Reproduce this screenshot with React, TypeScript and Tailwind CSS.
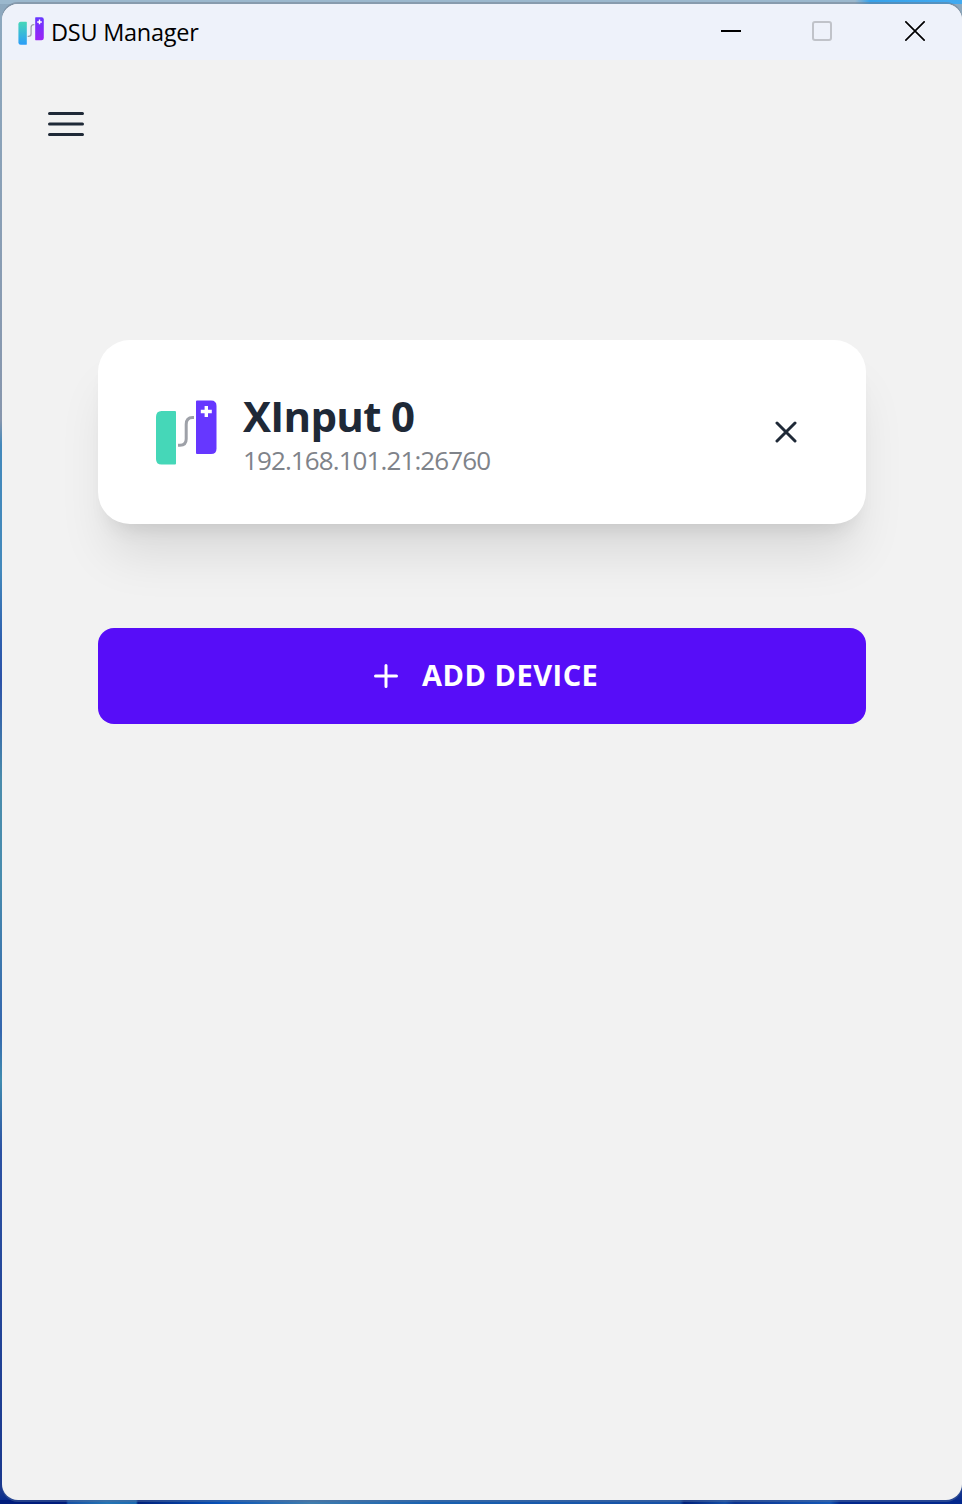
import React from "react";

function Logo({ id, className, gradient = false }: { id: string; className: string; gradient?: boolean }) {
  const left = gradient ? `url(#${id}-left)` : "#45d7b8";
  const right = gradient ? `url(#${id}-right)` : "#6637ff";
  return (
    <svg className={className} viewBox="0 0 62 65" preserveAspectRatio="none" aria-hidden="true">
      <defs>
        <linearGradient id={`${id}-left`} x1="0" y1="0" x2="0" y2="1">
          <stop offset="0" stopColor="#45d7b8" />
          <stop offset="1" stopColor="#2b9df8" />
        </linearGradient>
        <linearGradient id={`${id}-right`} x1="0" y1="0" x2="0" y2="1">
          <stop offset="0" stopColor="#6637ff" />
          <stop offset="1" stopColor="#9c24f5" />
        </linearGradient>
      </defs>
      <path d="M6.500 11H20Q21 11 21 12V63.500Q21 64.500 20 64.500H6.500Q1 64.500 1 59V17Q1 11 6.500 11Z" fill={left} />
      <path d="M42 .5H56Q61.500 .5 61.500 6V48.500Q61.500 54 56 54H42Q41 54 41 53V1.500Q41 .5 42 .5Z" fill={right} />
      <path d="M23 45.200H25Q31.200 45.200 31.200 39V24.500Q31.200 17.500 37.500 17.500H39" fill="none" stroke="#9ea1a8" strokeWidth="3" />
      <path d="M51.300 6V17M45.800 11.500H56.800" stroke="#fff" strokeWidth="3.400" />
    </svg>
  );
}

function TitleBar() {
  return (
    <header className="flex h-14 shrink-0 items-start bg-[#eef2fa] pr-px pl-4">
      <Logo id="app" gradient className="mt-[13px] h-7 w-[26px]" />
      <h1 className="ml-[7px] mt-3 text-[23.5px] leading-8 tracking-[-0.25px] text-black">DSU Manager</h1>
      <div className="ml-auto flex">
        <button className="flex h-[54px] w-[92px] items-center justify-center" aria-label="Minimize">
          <span className="h-0.5 w-5 bg-black" />
        </button>
        <button className="flex h-[54px] w-[92px] items-center justify-center" aria-label="Maximize">
          <span className="mr-0.5 size-5 rounded-[3px] border-2 border-[#c0c3c9]" />
        </button>
        <button className="flex h-[54px] w-[92px] items-center justify-center" aria-label="Close">
          <svg className="size-5" viewBox="0 0 20 20" fill="none" stroke="#000" strokeWidth="1.700">
            <path d="M.3 .3 19.700 19.700M19.700 .3 .3 19.700" />
          </svg>
        </button>
      </div>
    </header>
  );
}

function DeviceCard() {
  return (
    <section className="flex h-[184px] items-center rounded-[32px] bg-white pl-[57px] pr-[69px] shadow-[0_40px_50px_-10px_rgb(0_0_0/0.1),0_16px_20px_-12px_rgb(0_0_0/0.1)]">
      <Logo id="device" className="h-[65px] w-[62px]" />
      <div className="ml-[26px] pb-px">
        <h2 className="text-[42px] leading-[56px] font-bold tracking-[-0.7px] text-[#1f2937]">XInput 0</h2>
        <p className="text-[26px] leading-8 tracking-[-0.9px] text-[#7f838a]">192.168.101.21:26760</p>
      </div>
      <button className="ml-auto" aria-label="Remove device">
        <svg className="size-[22px]" viewBox="0 0 22 22" fill="none" stroke="#1f2937" strokeWidth="3" strokeLinecap="round">
          <path d="M2 2 20 20M20 2 2 20" />
        </svg>
      </button>
    </section>
  );
}

export default function App() {
  return (
    <div className="h-[1504px] w-[962px] overflow-hidden bg-[linear-gradient(180deg,#8da9bf_0,#8796ad_420px,#4389bc_445px,#4389bc_570px,#2e5fae_640px,#2c52a8_680px,#4a8cac_780px,#488cae_880px,#3466ae_1030px,#408cb0_1080px,#2c52a3_1150px,#1a388d_1490px,#02278c_1504px)] font-['Open_Sans','Noto_Sans',sans-serif]">
      <div className="flex h-full flex-col bg-[linear-gradient(90deg,#9bb8cd_0,#9bb8cd_855px,#37a2ea_870px,#42aaf0_100%),linear-gradient(90deg,#001c7c_66px,#1751a5_68px,#2474b4_107px,#1d6bb2_136px,#00217d_138px,#0752b8_220px,#3f7dae_310px,#1961b0_430px,#164fa5_680px,#00207b_684px,#134da6_725px,#0b328f_735px,#1457b6_830px,#02278c_840px)] bg-[length:100%_4px,100%_4px] bg-[position:0_0,0_100%] bg-no-repeat pt-1 pb-1 pl-0.5">
        <div className="flex flex-1 flex-col overflow-hidden rounded-2xl bg-[#f2f2f2] shadow-[0_-2px_0_rgb(110_120_135/0.45),0_2px_0_rgb(82_108_155/0.45)]">
          <TitleBar />
          <main className="flex-1">
            <nav className="flex pt-[52px] pl-[46px]">
              <button aria-label="Menu">
                <svg className="h-6 w-9" viewBox="0 0 36 24" fill="none" stroke="#1f2937" strokeWidth="3" strokeLinecap="round">
                  <path d="M1.500 1.500H34.500M1.500 12H34.500M1.500 22.500H34.500" />
                </svg>
              </button>
            </nav>
            <div className="mx-auto mt-[204px] flex w-[768px] flex-col gap-[104px]">
              <DeviceCard />
              <button className="flex h-24 items-center gap-6 rounded-2xl bg-[#570df8] pl-[276px] text-[29px] leading-8 font-bold tracking-[0.5px] text-white">
                <svg className="size-6" viewBox="0 0 24 24" fill="none" stroke="currentColor" strokeWidth="3" strokeLinecap="round">
                  <path d="M12 1.500V22.500M1.500 12H22.500" />
                </svg>
                <span className="pb-0.5">ADD DEVICE</span>
              </button>
            </div>
          </main>
        </div>
      </div>
    </div>
  );
}
